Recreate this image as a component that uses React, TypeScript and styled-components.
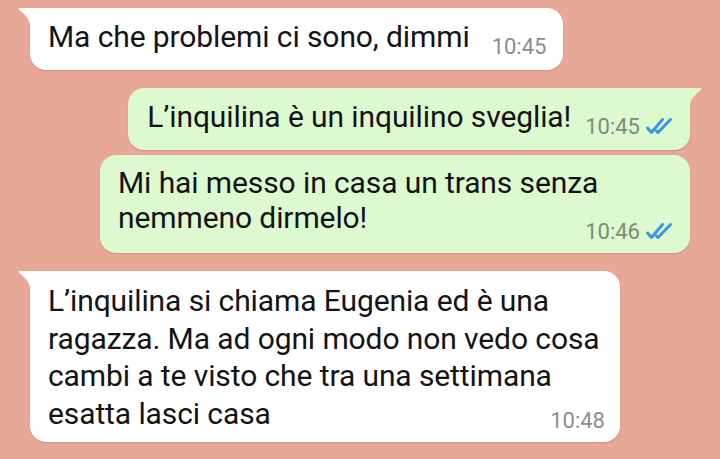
import styled, { createGlobalStyle } from "styled-components";

const GlobalStyle = createGlobalStyle`
	html, body {
		margin: 0;
		padding: 0;
		height: 100%;
		background: #e8a897;
	}
	body {
		font-family: Roboto, "Noto Sans", "Liberation Sans", sans-serif;
		overflow: hidden;
	}
`;

type Msg = {
	out: boolean;
	lines: string[];
	time: string;
	width?: number;
	lh?: number;
	metaTop?: number;
};

const messages: Msg[] = [
	{ out: false, lines: ["Ma che problemi ci sono, dimmi"], time: "10:45" },
	{ out: true, lines: ["L\u2019inquilina è un inquilino sveglia!"], time: "10:45" },
	{
		out: true,
		lines: ["Mi hai messo in casa un trans senza", "nemmeno dirmelo!"],
		time: "10:46",
		width: 590,
		lh: 35,
		metaTop: -14,
	},
	{
		out: false,
		lines: [
			"L\u2019inquilina si chiama Eugenia ed è una",
			"ragazza. Ma ad ogni modo non vedo cosa",
			"cambi a te visto che tra una settimana",
			"esatta lasci casa",
		],
		time: "10:48",
		width: 590,
		lh: 37.5,
		metaTop: -22,
	},
];

const Ticks = () => (
	<svg width="32" height="18" viewBox="0 0 32 18" fill="none">
		<path d="M2.5 11 L6.5 15.5 L17.5 2.5" stroke="#3b95e2" strokeWidth="3" strokeLinecap="round" strokeLinejoin="round" />
		<path d="M11.5 14 L13 15.5 L25.5 2.5" stroke="#3b95e2" strokeWidth="3" strokeLinecap="round" strokeLinejoin="round" />
	</svg>
);

const App = () => {
	return (
		<Chat>
			<GlobalStyle />
			{messages.map((m, i) => {
				const sameAsPrev = i > 0 && messages[i - 1].out === m.out;
				const stacked = m.lines.length > 1;
				return (
					<Bubble
						key={i}
						$out={m.out}
						$tail={!sameAsPrev}
						$gap={i === 0 ? 0 : sameAsPrev ? 5 : 18}
						$stacked={stacked}
						$width={m.width}
					>
						<Text $lh={m.lh ?? 35}>
							{m.lines.map((l, j) => (
								<span key={j}>
									{l}
									{j < m.lines.length - 1 && <br />}
								</span>
							))}
						</Text>
						<Meta $out={m.out} $stacked={stacked} $top={m.metaTop ?? 17}>
							<span>{m.time}</span>
							{m.out && <Ticks />}
						</Meta>
					</Bubble>
				);
			})}
		</Chat>
	);
};

export default App;

const Chat = styled.main`
	display: flex;
	flex-direction: column;
	align-items: flex-start;
	padding: 8px 30px 0;
	box-sizing: border-box;
	width: 720px;
	height: 459px;
`;

const Bubble = styled.div<{ $out: boolean; $tail: boolean; $gap: number; $stacked: boolean; $width?: number }>`
	position: relative;
	display: flex;
	flex-direction: ${p => (p.$stacked ? "column" : "row")};
	align-items: flex-start;
	gap: ${p => (p.$stacked ? 0 : p.$out ? 14 : 22)}px;
	box-sizing: border-box;
	width: ${p => (p.$width ? `${p.$width}px` : "auto")};
	margin-top: ${p => p.$gap}px;
	align-self: ${p => (p.$out ? "flex-end" : "flex-start")};
	padding: ${p =>
		p.$stacked
			? p.$out
				? "10px 13px 10px 18px"
				: "11px 15px 10px 18px"
			: p.$out
				? "11px 13px 12px 19px"
				: "11px 17px 12px 18px"};
	background: ${p => (p.$out ? "#ddf9d0" : "#ffffff")};
	color: #141414;
	border-radius: 16px;
	${p => p.$tail && (p.$out ? "border-top-right-radius: 0;" : "border-top-left-radius: 0;")}
	box-shadow: 0 1px 1.5px rgba(120, 60, 40, 0.22);

	&::before {
		content: ${p => (p.$tail ? '""' : "none")};
		position: absolute;
		top: 0;
		width: 14px;
		height: 20px;
		background: inherit;
		${p =>
			p.$out
				? "right: -12px; clip-path: path('M0 0 H12 Q14 0 13 2 Q3 8 1 20 H0 Z');"
				: "left: -12px; clip-path: path('M14 0 H2 Q0 0 1 2 Q11 8 13 20 H14 Z');"}
	}
`;

const Text = styled.p<{ $lh: number }>`
	margin: 0;
	font-size: 30px;
	line-height: ${p => p.$lh}px;
	white-space: nowrap;
	letter-spacing: -0.1px;
`;

const Meta = styled.div<{ $out: boolean; $stacked: boolean; $top: number }>`
	display: flex;
	align-items: flex-end;
	gap: 5px;
	flex-shrink: 0;
	align-self: ${p => (p.$stacked ? "flex-end" : "flex-start")};
	margin-top: ${p => p.$top}px;
	font-size: 22px;
	line-height: 22px;
	height: 22px;
	color: ${p => (p.$out ? "#7b8c78" : "#8d8d8d")};

	& svg {
		margin-bottom: 3px;
	}
`;
